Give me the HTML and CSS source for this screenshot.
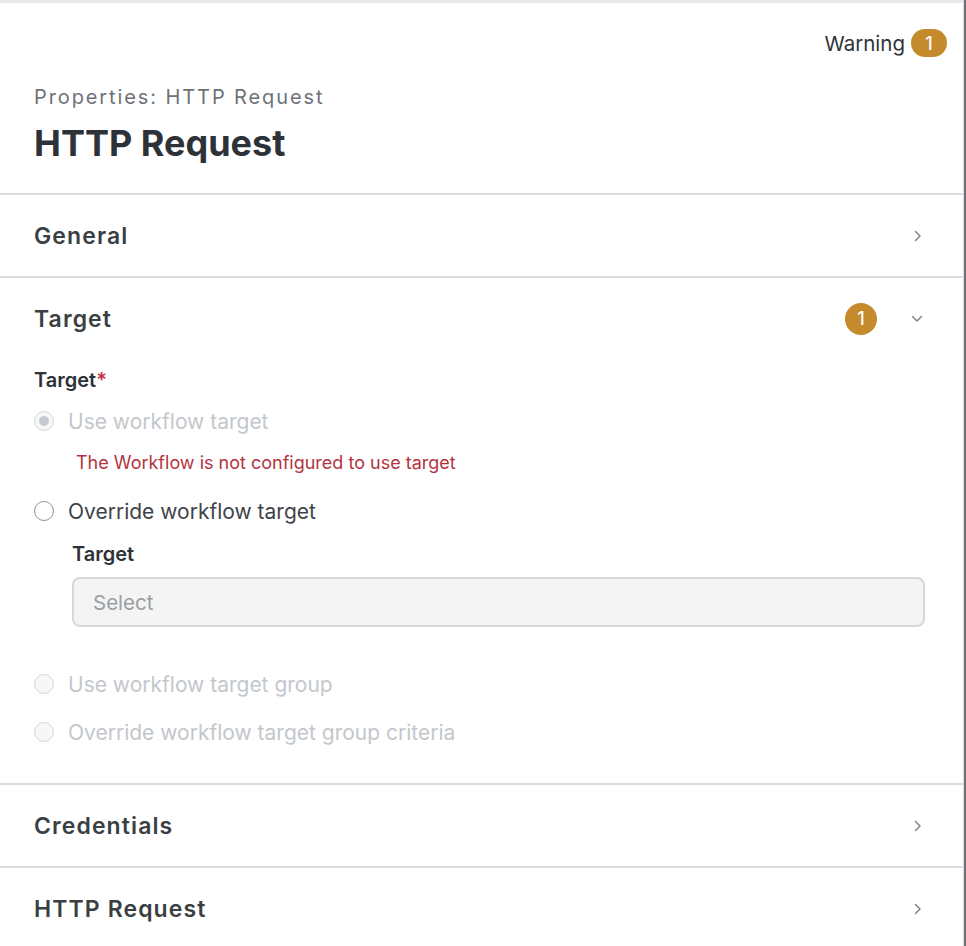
FILE: index.html
```html
<!DOCTYPE html>
<html>
<head>
<meta charset="utf-8">
<link rel="stylesheet" href="styles.css">
</head>
<body>
<div class="frame">
  <div class="panel">
    <header class="header">
      <div class="status">
        <span class="status-label">Warning</span>
        <span class="badge badge-pill">1</span>
      </div>
      <div class="subtitle">Properties: HTTP Request</div>
      <h1 class="title">HTTP Request</h1>
    </header>

    <section class="section">
      <div class="section-head">
        <span class="section-title">General</span>
        <svg class="chev" width="14" height="16" viewBox="0 0 14 16"><path d="M4.5 3.5 L9 8 L4.5 12.5" fill="none" stroke="#80868c" stroke-width="1.5" stroke-linecap="round" stroke-linejoin="round"/></svg>
      </div>
    </section>

    <section class="section">
      <div class="section-head">
        <span class="section-title">Target</span>
        <span class="head-right">
          <span class="badge badge-round">1</span>
          <svg class="chev" width="16" height="14" viewBox="0 0 16 14"><path d="M3.5 4.5 L8 9 L12.5 4.5" fill="none" stroke="#80868c" stroke-width="1.5" stroke-linecap="round" stroke-linejoin="round"/></svg>
        </span>
      </div>
      <div class="section-body">
        <div class="field-label">Target<span class="req">*</span></div>
        <div class="radio-row disabled first">
          <span class="radio checked"></span>
          <span>Use workflow target</span>
        </div>
        <div class="error">The Workflow is not configured to use target</div>
        <div class="radio-row">
          <span class="radio"></span>
          <span>Override workflow target</span>
        </div>
        <div class="sub-field">
          <div class="sub-label">Target</div>
          <div class="select">Select</div>
        </div>
        <div class="radio-row disabled spaced">
          <span class="radio"></span>
          <span>Use workflow target group</span>
        </div>
        <div class="radio-row disabled">
          <span class="radio"></span>
          <span>Override workflow target group criteria</span>
        </div>
      </div>
    </section>

    <section class="section">
      <div class="section-head">
        <span class="section-title">Credentials</span>
        <svg class="chev" width="14" height="16" viewBox="0 0 14 16"><path d="M4.5 3.5 L9 8 L4.5 12.5" fill="none" stroke="#80868c" stroke-width="1.5" stroke-linecap="round" stroke-linejoin="round"/></svg>
      </div>
    </section>

    <section class="section last">
      <div class="section-head">
        <span class="section-title">HTTP Request</span>
        <svg class="chev" width="14" height="16" viewBox="0 0 14 16"><path d="M4.5 3.5 L9 8 L4.5 12.5" fill="none" stroke="#80868c" stroke-width="1.5" stroke-linecap="round" stroke-linejoin="round"/></svg>
      </div>
    </section>
  </div>
</div>
</body>
</html>
```

FILE: styles.css
```css
* { box-sizing: border-box; }
html, body { margin: 0; padding: 0; background: #fff; }
body { font-family: Inter, "Noto Sans", sans-serif; color: #33383d; }

.frame {
  width: 966px;
  height: 946px;
  border-right: 2px solid #6f7072;
  overflow: hidden;
}
.panel {
  height: 100%;
  border-top: 3px solid #e7e9ec;
  border-right: 1px solid #dcdee1;
}

.header {
  padding: 26px 16px 0 34px;
  border-bottom: 2px solid #d9dce0;
  height: 192px;
}
.status {
  display: flex;
  justify-content: flex-end;
  align-items: center;
  gap: 6px;
  height: 28px;
}
.status-label { font-size: 20.5px; color: #2f3439; }
.badge {
  background: #c48a2b;
  color: #fff;
  font-size: 18px;
  font-weight: 500;
  display: inline-flex;
  align-items: center;
  justify-content: center;
}
.badge-pill { width: 36px; height: 28px; border-radius: 14px; }
.badge-round { width: 32px; height: 32px; border-radius: 50%; }

.subtitle {
  margin-top: 28px;
  font-size: 20px;
  letter-spacing: 1.9px;
  color: #6d7278;
}
.title {
  margin: 12px 0 0;
  font-size: 36px;
  font-weight: 700;
  color: #2d3238;
}

.section { border-bottom: 2px solid #d9dce0; }
.section.last { border-bottom: none; }
.section-head {
  height: 81px;
  display: flex;
  align-items: center;
  justify-content: space-between;
  padding: 0 38px 0 34px;
}
.section-title {
  font-size: 23px;
  font-weight: 600;
  color: #3a3f44;
  letter-spacing: 1.1px;
}
.head-right { display: flex; align-items: center; gap: 32px; }

.section-body { padding: 9px 40px 27px 34px; }
.field-label { font-size: 20px; font-weight: 600; color: #2d3238; line-height: 24px; }
.req { color: #c0333f; }

.radio-row {
  display: flex;
  align-items: center;
  gap: 14px;
  font-size: 21px;
  color: #3e4349;
  height: 48px;
}
.radio-row.first { margin-top: 5px; }
.radio {
  width: 20px;
  height: 20px;
  border-radius: 50%;
  border: 1.5px solid #8d9298;
  background: #fff;
  flex: none;
  position: relative;
}
.radio.checked::after {
  content: "";
  position: absolute;
  left: 3.5px; top: 3.5px;
  width: 10px; height: 10px;
  border-radius: 50%;
  background: #c6c9cd;
}
.radio-row.disabled { color: #c3c7cc; }
.radio-row.disabled .radio { border-color: #d3d6d9; background: #f7f7f8; }
.radio-row.spaced { margin-top: 33px; }

.error {
  margin-left: 42px;
  font-size: 18px;
  color: #b3343f;
  height: 42px;
  line-height: 36px;
}

.sub-field { padding-left: 38px; }
.sub-label { font-size: 20px; font-weight: 600; color: #2d3238; line-height: 24px; margin-top: 7px; }
.select {
  margin-top: 11px;
  height: 50px;
  border: 2px solid #d5d8dc;
  border-radius: 8px;
  background: #f4f4f4;
  color: #9a9ea3;
  font-size: 20.5px;
  display: flex;
  align-items: center;
  padding-left: 19px;
  width: 853px;
}
```
